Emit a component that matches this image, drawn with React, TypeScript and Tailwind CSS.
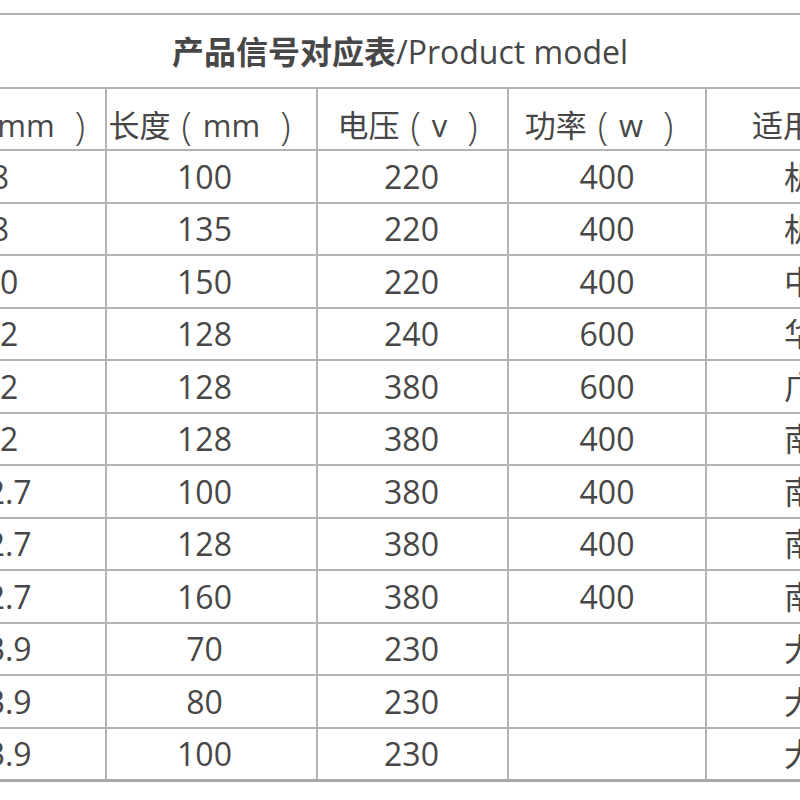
const rows: [string, string, string, string, string][] = [
  ["8", "100", "220", "400", "机床"],
  ["8", "135", "220", "400", "机床"],
  ["10", "150", "220", "400", "中山"],
  ["12", "128", "240", "600", "华南"],
  ["12", "128", "380", "600", "广东"],
  ["12", "128", "380", "400", "南京"],
  ["12.7", "100", "380", "400", "南京"],
  ["12.7", "128", "380", "400", "南京"],
  ["12.7", "160", "380", "400", "南京"],
  ["13.9", "70", "230", "", "大连"],
  ["13.9", "80", "230", "", "大连"],
  ["13.9", "100", "230", "", "大连"],
];

const headers: [string, string][] = [
  ["直径", "mm"],
  ["长度", "mm"],
  ["电压", "v"],
  ["功率", "w"],
  ["适用机型", ""],
];

const grid = "grid grid-cols-[210px_211px_191px_198px_214px] border-t-2 border-[#b4b4b4]";
const cellBorder = "border-l-2 border-[#b4b4b4]";

// small per-column nudges so the text sits where the reference has it
const headPad = ["pr-[12px]", `${cellBorder} pr-[24px]`, `${cellBorder} pr-[10px]`, `${cellBorder} pr-[16px]`, `${cellBorder} pl-[2px]`];
const bodyPad = ["", `${cellBorder} pr-[14px]`, `${cellBorder} pr-[2px]`, cellBorder, `${cellBorder} pl-[6px]`];

function HeadLabel({ label, unit }: { label: string; unit: string }) {
  if (!unit) return <span>{label}</span>;
  return (
    <span className="flex items-center">
      <span>{label}</span>
      <span className="ml-[11px] text-[38px] font-light leading-none">(</span>
      <span className="ml-[11px]">{unit}</span>
      <span className="ml-[20px] text-[38px] font-light leading-none">)</span>
    </span>
  );
}

export default function App() {
  return (
    <div
      className="w-[800px] h-[800px] overflow-hidden bg-white pt-[13px] text-[#474747]"
      style={{ fontFamily: '"Open Sans", "Noto Sans CJK SC", sans-serif' }}
    >
      <div className="ml-[-105px] w-[1024px]">
        {/* title */}
        <div className="h-[74px] border-t-2 border-[#b4b4b4] flex items-center justify-center pr-[14px] pt-[1px]">
          <span className="text-[32px] leading-none">
            <span className="font-bold">产品信号对应表</span>/Product model
          </span>
        </div>

        {/* header */}
        <div className={`${grid} h-[62px]`}>
          {headers.map(([label, unit], i) => (
            <div
              key={label}
              className={`flex items-center justify-center pt-[12px] text-[31px] leading-none ${headPad[i]}`}
            >
              <HeadLabel label={label} unit={unit} />
            </div>
          ))}
        </div>

        {/* body */}
        {rows.map((r, ri) => (
          <div key={ri} className={`${grid} ${ri % 2 === 0 ? "h-[53px]" : "h-[52px]"}`}>
            {r.map((c, ci) => (
              <div
                key={ci}
                className={`flex items-center justify-center text-[32px] leading-none ${bodyPad[ci]}`}
              >
                {c}
              </div>
            ))}
          </div>
        ))}
        <div className="border-t-[3px] border-[#a8a8a8]" />
      </div>
    </div>
  );
}
